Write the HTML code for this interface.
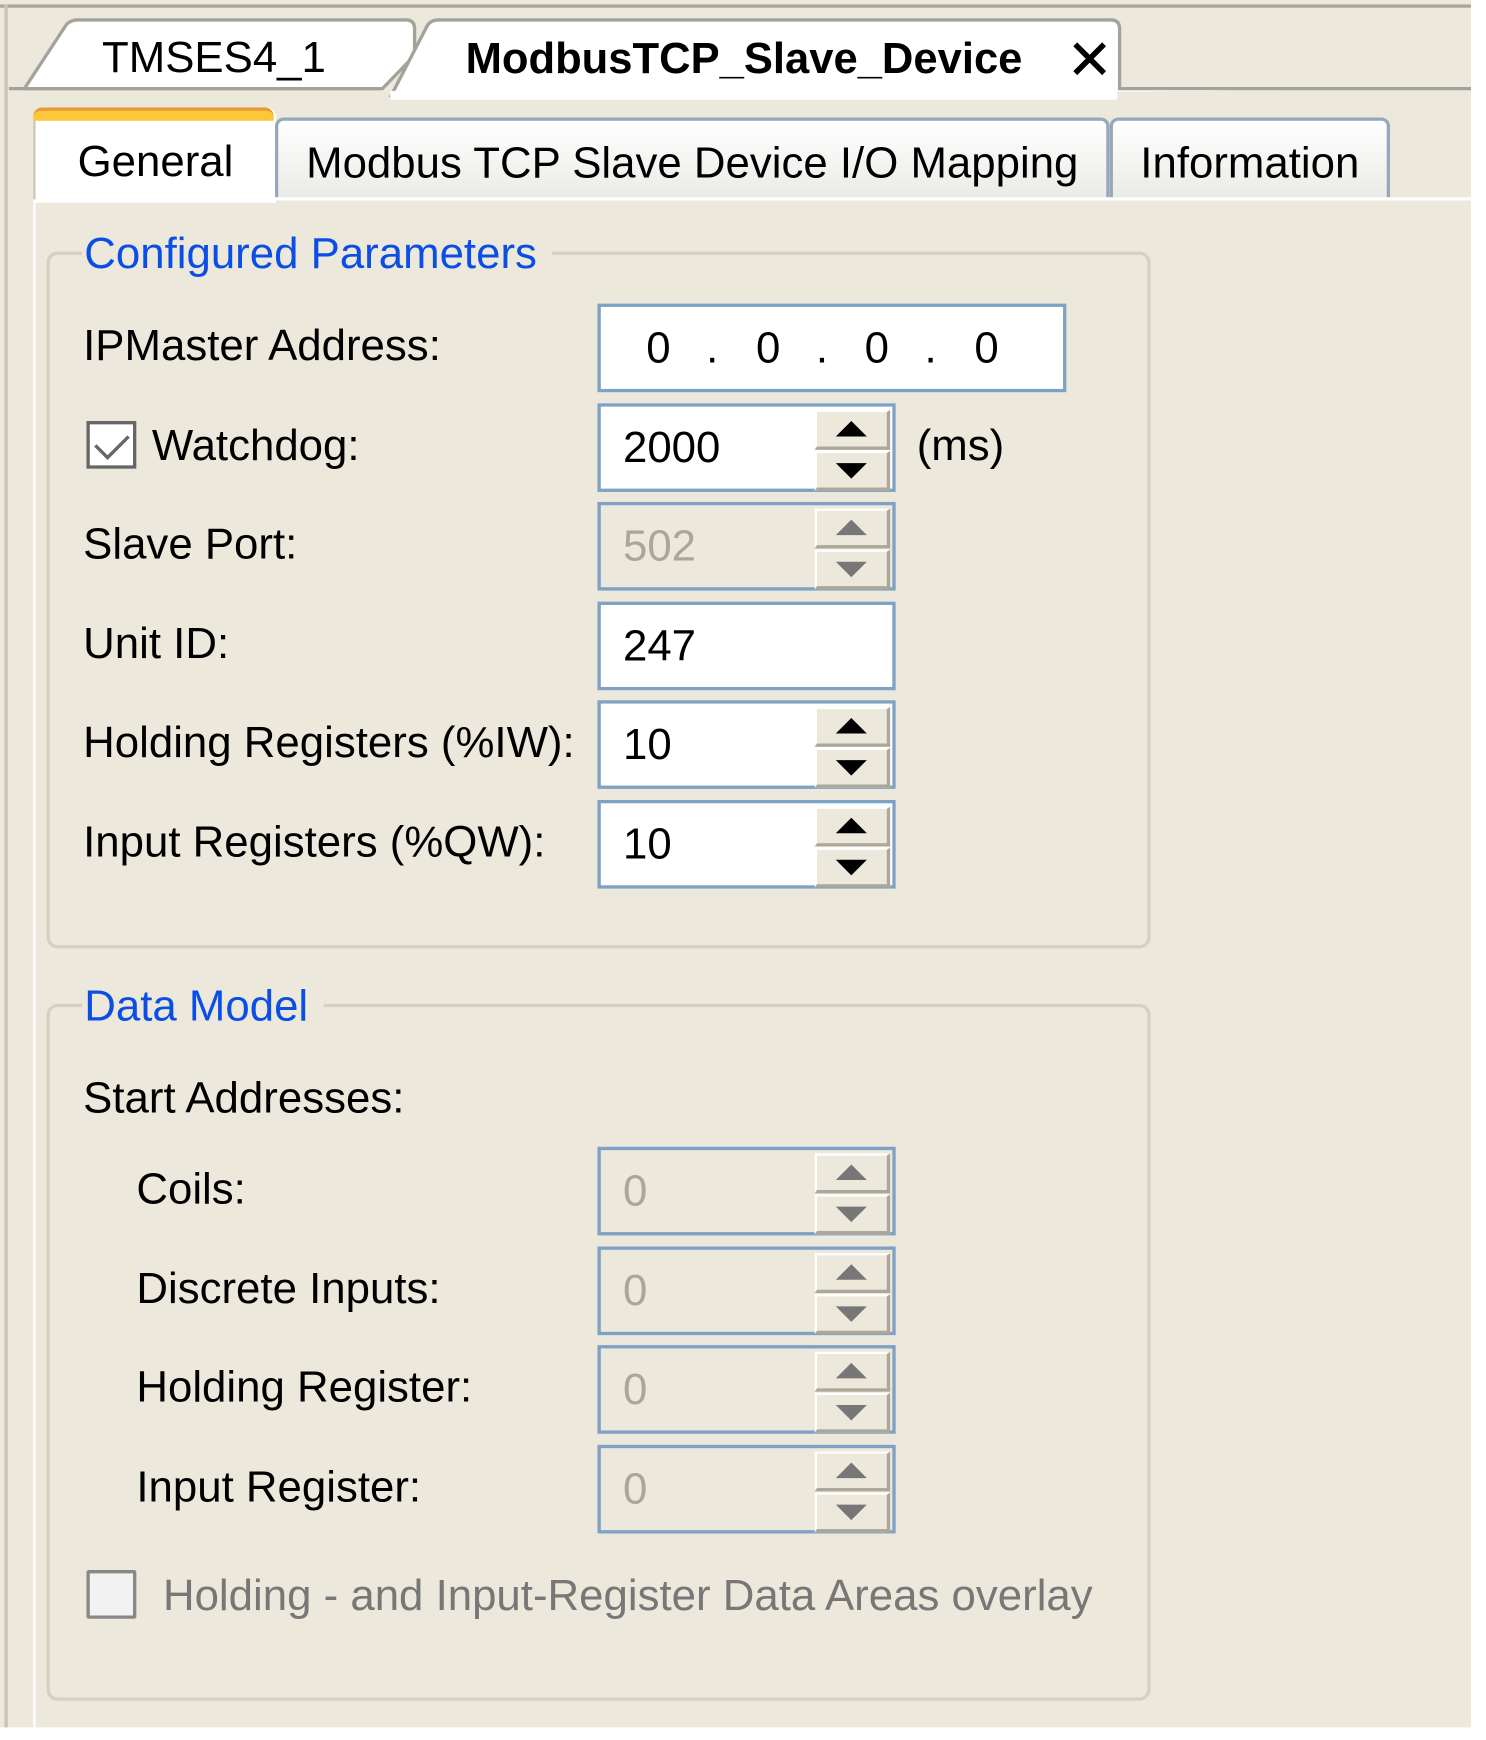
<!DOCTYPE html>
<html><head><style>
html,body{margin:0;padding:0;width:1486px;height:1739px;overflow:hidden;background:#fff}
#w{position:absolute;left:0;top:0;width:1340px;height:1570px;transform:scale(1.1085,1.108);transform-origin:0 0;font-family:"Liberation Sans",sans-serif}
.a{position:absolute}
.bg{left:0;top:0;width:1327px;height:1559px;background:#ece8dc}
.lbl{position:absolute;font-size:39.5px;color:#000;line-height:40px;white-space:nowrap}
.box{position:absolute;border:3px solid #7fa1c4;background:#fff;box-sizing:border-box;height:80px}
.box.d{background:#ece8dc}
.val{position:absolute;left:20px;top:17px;font-size:39.5px;line-height:40px}
.d .val{color:#aaa69a}
.sp{position:absolute;right:2px;width:68px;height:36px;background:#ece8dc;border-top:2px solid #fff;border-left:2px solid #fff;border-right:3px solid #aca899;border-bottom:3px solid #aca899;box-sizing:border-box}
.up{top:3px}.dn{top:40px}
.tri{position:absolute;left:17px;width:0;height:0;border-left:14px solid transparent;border-right:14px solid transparent}
.up .tri{top:8px;border-bottom:14px solid #000}
.dn .tri{top:9px;border-top:14px solid #000}
.d .up .tri{border-bottom-color:#777}.d .dn .tri{border-top-color:#777}
.grp{position:absolute;border:3px solid #d5d1c0;border-radius:10px;box-sizing:border-box}
.gt{position:absolute;font-size:39.5px;color:#0a4ee6;background:#ece8dc;padding:0 14px 0 2px;line-height:42px}
.tab{position:absolute;top:106px;height:74px;border:3px solid #95a9bb;border-bottom:none;border-radius:8px 8px 0 0;background:linear-gradient(#fff,#ebeae6);box-sizing:border-box;font-size:39.5px;text-align:center;line-height:76px;white-space:nowrap}
.ip{position:absolute;top:17px;font-size:39.5px;line-height:40px}
</style></head><body><div id="w">
<div class="a bg"></div>
<div class="a" style="left:0;top:4px;width:1327px;height:3px;background:#aca899"></div>
<div class="a" style="left:4px;top:4px;width:3px;height:1555px;background:#c8c4b4"></div>
<svg class="a" style="left:0;top:0" width="1330" height="100">
<path d="M22,80 L60,22 Q64,18 70,18 L366,18 Q374,18 374,26 L374,50 L345,80 Z" fill="#fff" stroke="#a3a39b" stroke-width="3"/>
<path d="M8,80 L345,80" stroke="#a3a39b" stroke-width="3"/>
<path d="M352,88 L385,24 Q388,18 396,18 L1002,18 Q1010,18 1010,26 L1010,80 L1327,80" fill="#fff" stroke="#a3a39b" stroke-width="3"/>
<rect x="352" y="82" width="656" height="8" fill="#fff"/>
</svg>
<div class="lbl" style="left:92px;top:32px">TMSES4_1</div>
<div class="lbl" style="left:420px;top:33px;font-size:39.3px;font-weight:bold">ModbusTCP_Slave_Device</div>
<svg class="a" style="left:966px;top:36px" width="34" height="34"><path d="M4,4 L30,30 M30,4 L4,30" stroke="#000" stroke-width="5"/></svg>
<div class="a" style="left:30px;top:97px;width:217px;height:86px;background:#fff;border-radius:8px 8px 0 0;border-left:2px solid #c8c4b4"></div>
<div class="a" style="left:30px;top:97px;width:217px;height:12px;background:#fdc73b;border-top:3px solid #e89a33;border-radius:8px 8px 0 0;box-sizing:border-box"></div>
<div class="lbl" style="left:70px;top:126px">General</div>
<div class="tab" style="left:248px;width:753px">Modbus TCP Slave Device I/O Mapping</div>
<div class="tab" style="left:1001px;width:253px">Information</div>
<div class="a" style="left:247px;top:178px;width:1080px;height:3px;background:#fff"></div>
<div class="a" style="left:30px;top:180px;width:2px;height:1379px;background:#fff"></div>
<div class="grp" style="left:42px;top:227px;width:996px;height:629px"></div>
<div class="gt" style="left:74px;top:208px">Configured Parameters</div>
<div class="lbl" style="left:75px;top:292px">IPMaster Address:</div>
<div class="box" style="left:539px;top:274px;width:423px">
<div class="ip" style="left:41px">0</div><div class="ip" style="left:95px">.</div>
<div class="ip" style="left:140px">0</div><div class="ip" style="left:194px">.</div>
<div class="ip" style="left:238px">0</div><div class="ip" style="left:292px">.</div>
<div class="ip" style="left:337px">0</div></div>
<div class="a" style="left:78px;top:380px;width:45px;height:43px;border:3px solid #666;background:#fff;box-sizing:border-box"></div>
<svg class="a" style="left:78px;top:380px" width="45" height="43"><path d="M8,22 L19,33 L38,14" stroke="#666" stroke-width="3" fill="none"/></svg>
<div class="lbl" style="left:137px;top:382px">Watchdog:</div>
<div class="box" style="left:539px;top:364px;width:269px"><div class="val">2000</div><div class="sp up"><div class="tri"></div></div><div class="sp dn"><div class="tri"></div></div></div>
<div class="lbl" style="left:827px;top:382px">(ms)</div>
<div class="lbl" style="left:75px;top:471px">Slave Port:</div>
<div class="box d" style="left:539px;top:453px;width:269px"><div class="val">502</div><div class="sp up"><div class="tri"></div></div><div class="sp dn"><div class="tri"></div></div></div>
<div class="lbl" style="left:75px;top:561px">Unit ID:</div>
<div class="box" style="left:539px;top:543px;width:269px"><div class="val">247</div></div>
<div class="lbl" style="left:75px;top:650px">Holding Registers (%IW):</div>
<div class="box" style="left:539px;top:632px;width:269px"><div class="val">10</div><div class="sp up"><div class="tri"></div></div><div class="sp dn"><div class="tri"></div></div></div>
<div class="lbl" style="left:75px;top:740px">Input Registers (%QW):</div>
<div class="box" style="left:539px;top:722px;width:269px"><div class="val">10</div><div class="sp up"><div class="tri"></div></div><div class="sp dn"><div class="tri"></div></div></div>
<div class="grp" style="left:42px;top:906px;width:996px;height:629px"></div>
<div class="gt" style="left:74px;top:887px">Data Model</div>
<div class="lbl" style="left:75px;top:971px">Start Addresses:</div>
<div class="lbl" style="left:123px;top:1053px">Coils:</div>
<div class="box d" style="left:539px;top:1035px;width:269px"><div class="val">0</div><div class="sp up"><div class="tri"></div></div><div class="sp dn"><div class="tri"></div></div></div>
<div class="lbl" style="left:123px;top:1143px">Discrete Inputs:</div>
<div class="box d" style="left:539px;top:1125px;width:269px"><div class="val">0</div><div class="sp up"><div class="tri"></div></div><div class="sp dn"><div class="tri"></div></div></div>
<div class="lbl" style="left:123px;top:1232px">Holding Register:</div>
<div class="box d" style="left:539px;top:1214px;width:269px"><div class="val">0</div><div class="sp up"><div class="tri"></div></div><div class="sp dn"><div class="tri"></div></div></div>
<div class="lbl" style="left:123px;top:1322px">Input Register:</div>
<div class="box d" style="left:539px;top:1304px;width:269px"><div class="val">0</div><div class="sp up"><div class="tri"></div></div><div class="sp dn"><div class="tri"></div></div></div>
<div class="a" style="left:78px;top:1417px;width:45px;height:44px;border:3px solid #888;background:#f2f2f2;box-sizing:border-box;border-radius:2px"></div>
<div class="lbl" style="left:147px;top:1420px;color:#777">Holding - and Input-Register Data Areas overlay</div>
</div></body></html>
